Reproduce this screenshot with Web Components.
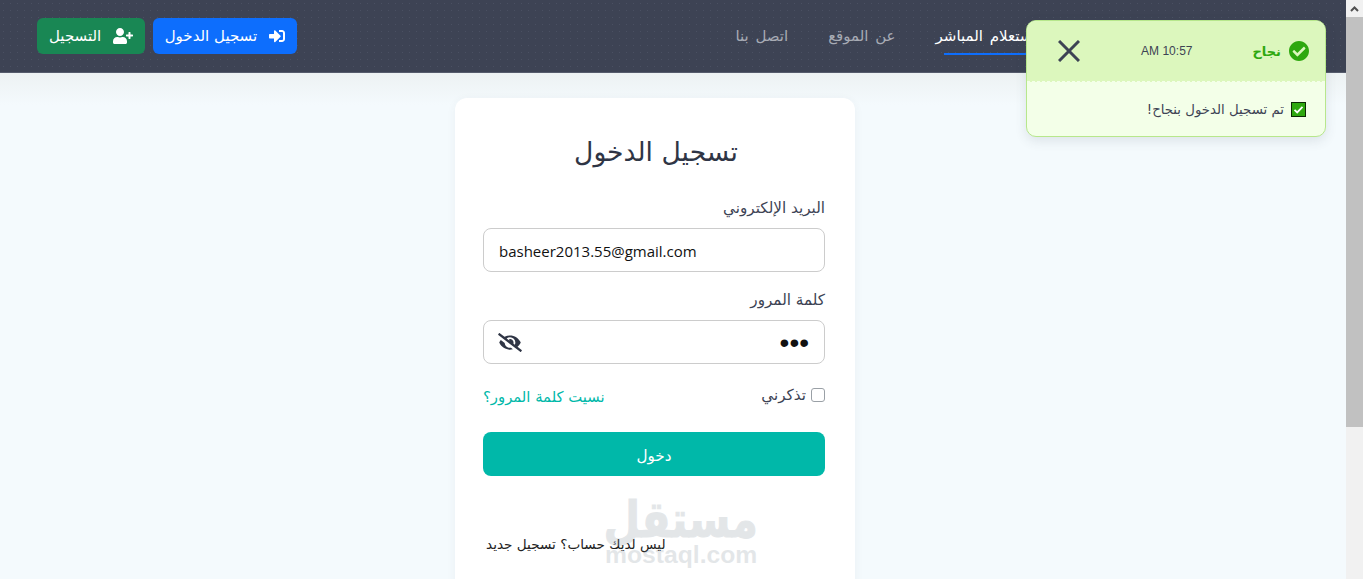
<!DOCTYPE html>
<html lang="ar" dir="rtl">
<head>
<meta charset="utf-8">
<title>تسجيل الدخول</title>
<style>
  html, body { margin: 0; height: 100%; overflow: hidden; }
  body { font-family: "DejaVu Sans", "Noto Sans", sans-serif; color: #3d4354; background: #f4fafd; }
  #page { display: flex; height: 579px; }
  #main {
    flex: 1 1 auto;
    min-width: 0;
    position: relative;
    overflow: hidden;
    background: linear-gradient(#edf2f3 73px, #f4fafd 105px);
  }
</style>
</head>
<body>
<div id="page">
  <page-scrollbar></page-scrollbar>
  <div id="main">
    <top-navbar>
      <nav-link slot="links" active>الاستعلام المباشر</nav-link>
      <nav-link slot="links">عن الموقع</nav-link>
      <nav-link slot="links">اتصل بنا</nav-link>
      <nav-button slot="actions" color="#0d6efd" label="تسجيل الدخول">
        <svg slot="icon" width="16" height="16" viewBox="0 0 512 512" fill="#fff"><path d="M416 448h-84c-6.6 0-12-5.4-12-12v-40c0-6.6 5.4-12 12-12h84c17.7 0 32-14.3 32-32V160c0-17.7-14.3-32-32-32h-84c-6.6 0-12-5.4-12-12V76c0-6.6 5.4-12 12-12h84c53 0 96 43 96 96v192c0 53-43 96-96 96zm-47-201L201 79c-15-15-41-4.5-41 17v96H24c-13.3 0-24 10.7-24 24v96c0 13.3 10.7 24 24 24h136v96c0 21.5 26 32 41 17l168-168c9.3-9.4 9.3-24.6 0-34z"/></svg>
      </nav-button>
      <nav-button slot="actions" color="#198754" label="التسجيل">
        <svg slot="icon" width="20" height="16" viewBox="0 0 640 512" fill="#fff"><path d="M624 208h-64v-64c0-8.8-7.2-16-16-16h-32c-8.8 0-16 7.2-16 16v64h-64c-8.8 0-16 7.2-16 16v32c0 8.8 7.2 16 16 16h64v64c0 8.8 7.2 16 16 16h32c8.8 0 16-7.2 16-16v-64h64c8.8 0 16-7.2 16-16v-32c0-8.8-7.2-16-16-16zm-400 48c70.7 0 128-57.3 128-128S294.7 0 224 0 96 57.3 96 128s57.3 128 128 128zm89.6 32h-16.7c-22.2 10.2-46.9 16-72.9 16s-50.6-5.8-72.9-16h-16.7C60.2 288 0 348.2 0 422.4V464c0 26.5 21.5 48 48 48h352c26.5 0 48-21.5 48-48v-41.6c0-74.2-60.2-134.4-134.4-134.4z"/></svg>
      </nav-button>
    </top-navbar>
    <login-card></login-card>
    <toast-message></toast-message>
    <site-watermark></site-watermark>
  </div>
</div>

<script>
class TopNavbar extends HTMLElement {
  constructor() {
    super();
    const shadowRoot = this.attachShadow({mode: 'open'});
    shadowRoot.innerHTML = `
      <style>
        :host {
          display: flex;
          justify-content: space-between;
          align-items: center;
          box-sizing: border-box;
          height: 73px;
          padding: 0 301px 0 37px;
          background-color: #3d4354;
          background-image: radial-gradient(#4a5062 0.6px, transparent 0.8px);
          background-size: 7px 7px;
          border-bottom: 1px solid #565c6c;
        }
        #links { display: flex; gap: 40px; align-items: center; }
        #actions { display: flex; gap: 8px; align-items: center; }
      </style>
      <div id="links"><slot name="links"></slot></div>
      <div id="actions"><slot name="actions"></slot></div>
    `;
  }
}

class NavLink extends HTMLElement {
  constructor() {
    super();
    const shadowRoot = this.attachShadow({mode: 'open'});
    shadowRoot.innerHTML = `
      <style>
        :host {
          display: block;
          position: relative;
          font-size: 15px;
          line-height: 36px;
          color: #a7abb4;
          word-spacing: 2px;
        }
        :host([active]) { color: #fff; }
        :host([active])::after {
          content: "";
          position: absolute;
          left: 8px;
          right: 8px;
          bottom: -1px;
          height: 2px;
          background: #0d6efd;
        }
      </style>
      <slot></slot>
    `;
  }
}

class NavButton extends HTMLElement {
  constructor() {
    super();
    const shadowRoot = this.attachShadow({mode: 'open'});
    shadowRoot.innerHTML = `
      <style>
        :host {
          display: flex;
          align-items: center;
          gap: 11.5px;
          height: 36px;
          padding: 0 12px;
          box-sizing: border-box;
          border-radius: 6px;
          color: #fff;
          font-size: 15px;
          white-space: nowrap;
        }
        slot[name="icon"]::slotted(svg) { display: block; }
      </style>
      <slot name="icon"></slot>
      <span id="label"></span>
    `;
  }
  connectedCallback() {
    this.style.background = this.getAttribute('color');
    this.shadowRoot.querySelector('#label').textContent = this.getAttribute('label');
  }
}

class FormField extends HTMLElement {
  constructor() {
    super();
    const shadowRoot = this.attachShadow({mode: 'open'});
    shadowRoot.innerHTML = `
      <style>
        :host { display: block; }
        label { display: block; font-size: 15.2px; line-height: 20px; color: #3d4354; margin-bottom: 10px; }
        #box {
          display: flex;
          align-items: center;
          height: 44px;
          box-sizing: border-box;
          padding: 0 15px;
          background: #fff;
          border: 1px solid #ccc;
          border-radius: 8px;
        }
        input {
          flex: 1 1 auto;
          min-width: 0;
          border: none;
          outline: none;
          padding: 0;
          background: transparent;
          color: #111;
          font: 15px "Open Sans", sans-serif;
          position: relative;
          top: 1px;
        }
        input[type="password"] { font: 28px "Liberation Sans", sans-serif; top: 1px; }
        ::slotted(svg) { display: block; flex: none; margin-right: 12px; margin-left: -1px; }
      </style>
      <label></label>
      <div id="box"><input><slot></slot></div>
    `;
  }
  connectedCallback() {
    const input = this.shadowRoot.querySelector('input');
    this.shadowRoot.querySelector('label').textContent = this.getAttribute('label');
    input.type = this.getAttribute('type') || 'text';
    input.value = this.getAttribute('value');
    if(input.type === 'email') {
      input.dir = 'ltr';
    }
  }
}

class LoginCard extends HTMLElement {
  constructor() {
    super();
    const shadowRoot = this.attachShadow({mode: 'open'});
    shadowRoot.innerHTML = `
      <style>
        :host {
          display: block;
          box-sizing: border-box;
          width: 400px;
          margin: 25px 491px 0 0;
          padding: 32px 30px 0 28px;
          height: 520px;
          background: #fff;
          border-radius: 12px;
          box-shadow: 0 2px 10px rgba(61, 67, 84, 0.06);
        }
        h1 {
          margin: 0 0 24px 4px;
          font-size: 26.6px;
          font-weight: 400;
          line-height: 44px;
          text-align: center;
          color: #2f3545;
        }
        form-field { margin-bottom: 18px; }
        #row {
          display: flex;
          justify-content: space-between;
          align-items: center;
          height: 31px;
          margin-top: -1px;
          font-size: 14.8px;
        }
        #remember { display: flex; align-items: center; gap: 5px; margin-top: -4px; font-size: 15.2px; }
        #box {
          width: 14px;
          height: 14px;
          box-sizing: border-box;
          background: #fff;
          border: 1px solid #9aa0a6;
          border-radius: 3px;
        }
        a { color: #00b8a9; text-decoration: none; }
        #submit {
          display: flex;
          align-items: center;
          justify-content: center;
          box-sizing: border-box;
          height: 44px;
          margin-top: 20px;
          padding-top: 4px;
          border-radius: 8px;
          background: #00b8a9;
          color: #fff;
          font-size: 15.2px;
        }
        #signup { margin: 58px 0 0 0; padding-left: 3px; font-size: 13.6px; line-height: 20px; color: #222; text-align: left; }
      </style>
      <h1>تسجيل الدخول</h1>
      <form-field label="البريد الإلكتروني" type="email" value="basheer2013.55@gmail.com"></form-field>
      <form-field label="كلمة المرور" type="password" value="123">
        <svg width="24" height="19" viewBox="0 0 640 512" fill="#2f3545"><path d="M320 400c-75.85 0-137.25-58.71-142.9-133.11L72.2 185.82c-13.79 17.3-26.48 35.59-36.72 55.59a32.35 32.35 0 0 0 0 29.19C89.71 376.41 197.07 448 320 448c26.91 0 52.87-4 77.89-10.46L346 397.39a144.13 144.13 0 0 1-26 2.61zm313.82 58.1l-110.55-85.44a331.25 331.25 0 0 0 81.25-102.07 32.35 32.35 0 0 0 0-29.19C550.29 135.59 442.93 64 320 64a308.15 308.15 0 0 0-147.32 37.7L45.46 3.37A16 16 0 0 0 23 6.18L3.37 31.45A16 16 0 0 0 6.18 53.9l588.36 454.73a16 16 0 0 0 22.46-2.81l19.64-25.27a16 16 0 0 0-2.82-22.45zm-183.72-142l-39.3-30.38A94.75 94.75 0 0 0 416 256a94.76 94.76 0 0 0-121.31-92.21A47.65 47.65 0 0 1 304 192a46.64 46.64 0 0 1-1.54 10l-73.61-56.89A142.31 142.31 0 0 1 320 112a143.92 143.92 0 0 1 144 144c0 21.63-5.29 41.79-13.9 60.11z"/></svg>
      </form-field>
      <div id="row">
        <div id="remember"><div id="box"></div><span>تذكرني</span></div>
        <a>نسيت كلمة المرور؟</a>
      </div>
      <div id="submit">دخول</div>
      <div id="signup">ليس لديك حساب؟ تسجيل جديد</div>
    `;
  }
}

class ToastMessage extends HTMLElement {
  constructor() {
    super();
    const shadowRoot = this.attachShadow({mode: 'open'});
    shadowRoot.innerHTML = `
      <style>
        :host {
          display: block;
          position: absolute;
          top: 20px;
          right: 20px;
          width: 300px;
          box-sizing: border-box;
          overflow: hidden;
          border: 1px solid #b7e78c;
          border-radius: 10px;
          background: #f3ffe8;
          box-shadow: 0 4px 12px rgba(61, 67, 84, 0.12);
        }
        #head {
          display: flex;
          align-items: center;
          height: 61px;
          box-sizing: border-box;
          padding: 0 16px 0 31px;
          background: #dcf7bd;
          border-bottom: 1px dashed #f3ffe8;
        }
        #title { margin-right: 8px; font-size: 13px; font-weight: 700; color: #2ea80f; }
        #time { margin-right: 60px; direction: ltr; font: 12px "Liberation Sans", sans-serif; color: #3d4354; }
        #close { margin-right: auto; display: block; }
        #body {
          display: flex;
          align-items: center;
          gap: 7px;
          height: 54px;
          box-sizing: border-box;
          padding: 0 19px;
          font-size: 13.3px;
          color: #3d4354;
        }
        svg { display: block; flex: none; }
      </style>
      <div id="head">
        <svg width="20" height="20" viewBox="8 8 496 496" fill="#2ea80f"><path d="M504 256c0 136.967-111.033 248-248 248S8 392.967 8 256 119.033 8 256 8s248 111.033 248 248zM227.314 387.314l184-184c6.248-6.248 6.248-16.379 0-22.627l-22.627-22.627c-6.248-6.249-16.379-6.249-22.628 0L216 308.118l-70.059-70.059c-6.248-6.248-16.379-6.248-22.628 0l-22.627 22.627c-6.248 6.248-6.248 16.379 0 22.627l104 104c6.249 6.249 16.379 6.249 22.628.001z"/></svg>
        <span id="title">نجاح</span>
        <span id="time">AM 10:57</span>
        <svg id="close" width="22" height="22" viewBox="0 0 22 22" stroke="#3d4354" stroke-width="3" fill="none"><path d="M1 1L21 21M21 1L1 21"/></svg>
      </div>
      <div id="body">
        <svg width="15" height="15" viewBox="0 0 15 15"><rect x="0.5" y="0.5" width="14" height="14" fill="#2ea80f" stroke="#0c2a04"/><path d="M3.5 7.8L6.2 10.4L11.5 4.8" fill="none" stroke="#fff" stroke-width="1.8"/></svg>
        <span>تم تسجيل الدخول بنجاح!</span>
      </div>
    `;
  }
}

class SiteWatermark extends HTMLElement {
  constructor() {
    super();
    const shadowRoot = this.attachShadow({mode: 'open'});
    shadowRoot.innerHTML = `
      <style>
        :host {
          display: block;
          position: absolute;
          left: 605px;
          top: 493px;
          width: 152px;
          text-align: center;
          color: #85929c;
          opacity: 0.22;
          font-weight: 700;
          pointer-events: none;
        }
        #ar { font-size: 44px; line-height: 54px; transform: translateX(4px) scale(0.96, 1.15); -webkit-text-stroke: 1px #85929c; }
        #en { margin-top: -5px; font: 700 24.7px/26px "Liberation Sans", sans-serif; direction: ltr; white-space: nowrap; }
      </style>
      <div id="ar">مستقل</div>
      <div id="en">mostaql.com</div>
    `;
  }
}

class PageScrollbar extends HTMLElement {
  constructor() {
    super();
    const shadowRoot = this.attachShadow({mode: 'open'});
    shadowRoot.innerHTML = `
      <style>
        :host { display: flex; flex-direction: column; flex: 0 0 17px; width: 17px; height: 579px; background: #f1f1f1; }
        #arrow { display: flex; align-items: center; justify-content: center; height: 17px; }
        #thumb { height: 410px; background: #c1c1c1; }
      </style>
      <div id="arrow"><svg width="9" height="6" viewBox="0 0 9 6" fill="none" stroke="#505050" stroke-width="2"><path d="M1 5L4.5 1.5L8 5"/></svg></div>
      <div id="thumb"></div>
    `;
  }
}

customElements.define('top-navbar', TopNavbar);
customElements.define('nav-link', NavLink);
customElements.define('nav-button', NavButton);
customElements.define('form-field', FormField);
customElements.define('login-card', LoginCard);
customElements.define('toast-message', ToastMessage);
customElements.define('site-watermark', SiteWatermark);
customElements.define('page-scrollbar', PageScrollbar);
</script>
</body>
</html>
